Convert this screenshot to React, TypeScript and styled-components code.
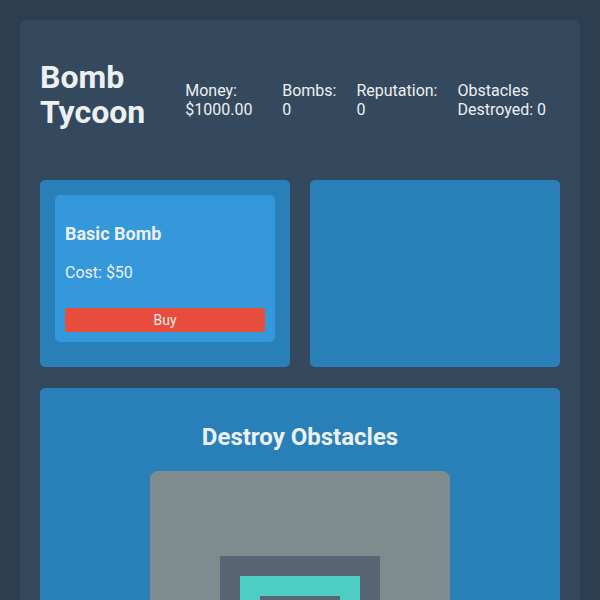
import styled, { createGlobalStyle } from "styled-components"

const GlobalStyle = createGlobalStyle`
    body {
        margin: 0;
        padding: 20px;
        background-color: #2c3e50;
        font-family: Roboto, "Liberation Sans", sans-serif;
        color: #ecf0f1;
    }
`

const Container = styled.div`
    background-color: #34495e;
    border-radius: 6px;
    padding: 20px;
`

const Header = styled.header`
    display: flex;
    align-items: center;
    gap: 40px;
    margin-bottom: 20px;
`

const Title = styled.h1`
    flex: none;
    width: min-content;
    font-size: 32px;
    line-height: 35px;
    margin: 20px 0 30px;
`

const Stats = styled.div`
    flex: 1;
    display: flex;
    gap: 20px;
    font-size: 16px;
`

const Grid = styled.div`
    display: grid;
    grid-template-columns: 1fr 1fr;
    gap: 20px;
    margin-bottom: 21px;
`

const Panel = styled.section<{ $centered?: boolean }>`
    background-color: #2980b9;
    border-radius: 5px;
    padding: 15px;
    text-align: ${p => (p.$centered ? "center" : "left")};
`

const Card = styled.div`
    background-color: #3498db;
    border-radius: 5px;
    padding: 10px;
    margin-bottom: 10px;
`

const CardTitle = styled.h3`
    font-size: 18px;
    margin: 18px 0 19px;
`

const Cost = styled.p`
    font-size: 16px;
    margin: 16px 0 26px;
`

const BuyButton = styled.button`
    display: block;
    width: 100%;
    padding: 4px 0;
    border: none;
    border-radius: 3px;
    background-color: #e74c3c;
    color: #ecf0f1;
    font-family: inherit;
    font-size: 14px;
    cursor: pointer;
`

const SectionTitle = styled.h2`
    font-size: 24px;
    margin: 20px 0;
`

const Field = styled.div`
    width: 300px;
    height: 330px;
    margin: 0 auto;
    background-color: #7f8c8d;
    border-radius: 8px;
    display: flex;
    align-items: center;
    justify-content: center;
`

const Ring = styled.div<{ $size: number; $color: string }>`
    width: ${p => p.$size}px;
    height: ${p => p.$size}px;
    background-color: ${p => p.$color};
    display: flex;
    align-items: center;
    justify-content: center;
`

const stats = [
    "Money: $1000.00",
    "Bombs: 0",
    "Reputation: 0",
    "Obstacles Destroyed: 0",
]

const App = (): JSX.Element => {
    return (
        <>
            <GlobalStyle />
            <Container>
                <Header>
                    <Title>Bomb Tycoon</Title>
                    <Stats>
                        {stats.map(s => (
                            <div key={s}>{s}</div>
                        ))}
                    </Stats>
                </Header>
                <Grid>
                    <Panel>
                        <Card>
                            <CardTitle>Basic Bomb</CardTitle>
                            <Cost>Cost: $50</Cost>
                            <BuyButton>Buy</BuyButton>
                        </Card>
                    </Panel>
                    <Panel />
                </Grid>
                <Panel $centered>
                    <SectionTitle>Destroy Obstacles</SectionTitle>
                    <Field>
                        <Ring $size={160} $color="#576574">
                            <Ring $size={120} $color="#4ecdc4">
                                <Ring $size={80} $color="#576574" />
                            </Ring>
                        </Ring>
                    </Field>
                </Panel>
            </Container>
        </>
    )
}

export default App
